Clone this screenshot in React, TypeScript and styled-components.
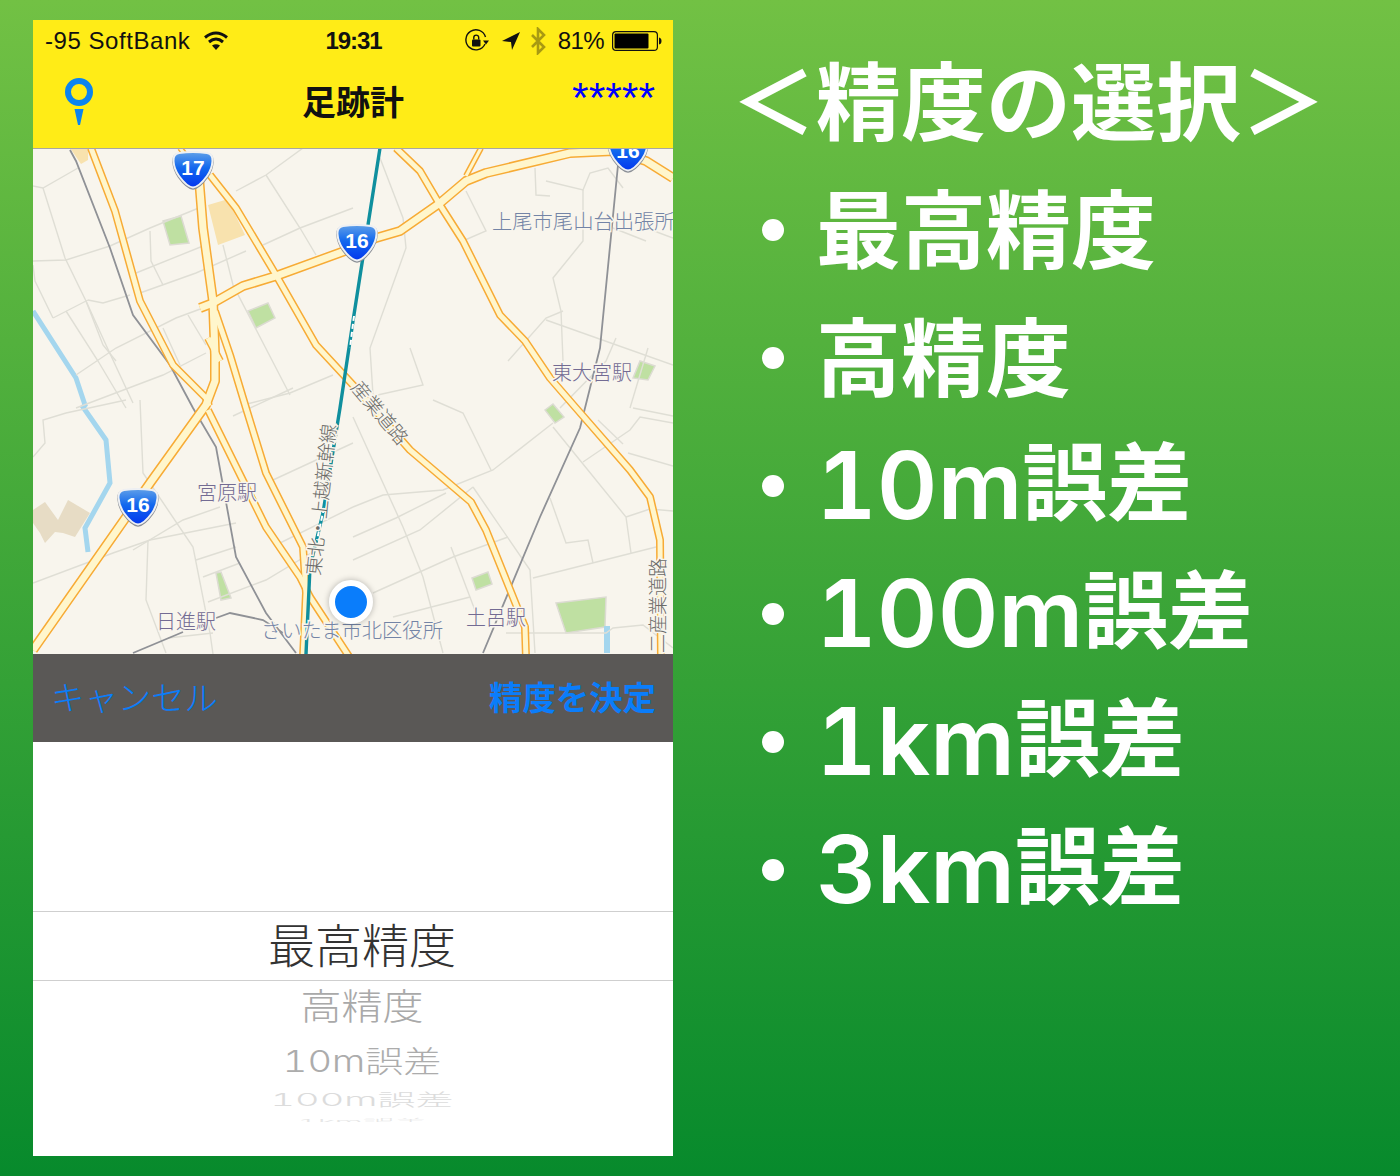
import React from "react";
import styled, { createGlobalStyle } from "styled-components";

const Global = createGlobalStyle`
  html, body { margin: 0; padding: 0; }
  body { background: #078a2c; }
`;

const Page = styled.div`
  width: 1400px;
  height: 1176px;
  display: flex;
  overflow: hidden;
  background: linear-gradient(180deg, #72c144 0%, #078a2c 100%);
  font-family: "Noto Sans CJK JP", sans-serif;
`;

const Phone = styled.div`
  margin: 20px 0 20px 33px;
  width: 640px;
  height: 1136px;
  display: flex;
  flex-direction: column;
  background: #fff;
  flex: none;
`;

const TopBar = styled.header`
  height: 128px;
  background: #ffec17;
  display: flex;
  flex-direction: column;
  flex: none;
`;

const StatusBar = styled.div`
  height: 40px;
  box-sizing: border-box;
  padding: 2px 11px 0 12px;
  display: grid;
  grid-template-columns: 1fr auto 1fr;
  align-items: center;
  font-family: "Liberation Sans", sans-serif;
  font-size: 24px;
  color: #111;
  white-space: nowrap;
`;

const Carrier = styled.span`
  display: flex;
  align-items: center;
  gap: 13px;
  letter-spacing: 0.55px;
`;

const Clock = styled.span`
  font-weight: 700;
  letter-spacing: -1.1px;
`;

const StatusRight = styled.span`
  display: flex;
  align-items: center;
  justify-content: flex-end;
`;

const IconSlot = styled.span<{ $after: number }>`
  display: flex;
  margin-right: ${(p) => p.$after}px;
`;

const Percent = styled.span`
  margin: 0 8px 0 12px;
  letter-spacing: -0.6px;
`;

const NavBar = styled.div`
  flex: 1;
  display: grid;
  grid-template-columns: 180px 1fr 180px;
  align-items: center;
`;

const PinSlot = styled.div`
  padding: 0 0 0 32px;
  display: flex;
  height: 48px;
  margin-top: -4px;
`;

const NavTitle = styled.h1`
  margin: 0 0 6px;
  text-align: center;
  font-size: 34px;
  line-height: 48px;
  font-weight: 700;
  color: #111;
`;

const Stars = styled.div`
  text-align: right;
  padding: 0 18px 14px 0;
  font-family: "Liberation Sans", sans-serif;
  font-size: 42.6px;
  line-height: 40px;
  color: #0000ff;
`;

const MapArea = styled.div`
  position: relative;
  height: 506px;
  flex: none;
  background: #f8f5ed;
  border-top: 1px solid #a9a79f;
  box-sizing: border-box;
  overflow: hidden;
`;

const MapSvg = styled.svg`
  display: block;
  position: absolute;
  top: -1px;
  left: 0;
`;

const MapLabel = styled.text<{ $tone: "place" | "station" | "road" }>`
  font-family: "Noto Sans CJK JP", sans-serif;
  font-size: ${(p) => (p.$tone === "road" ? 19 : p.$tone === "place" ? 20.3 : 20)}px;
  font-weight: 300;
  fill: ${(p) =>
    p.$tone === "place" ? "#7384a6" : p.$tone === "station" ? "#736b93" : "#6b6b68"};
  stroke: #f8f5ed;
  stroke-width: 3px;
  paint-order: stroke;
`;

const ShieldNumber = styled.text`
  font-family: "Liberation Sans", sans-serif;
  font-size: 21px;
  font-weight: 700;
  fill: #fff;
  text-anchor: middle;
`;

const LocationDot = styled.div`
  position: absolute;
  left: 296px;
  top: 431px;
  width: 32px;
  height: 32px;
  border-radius: 50%;
  background: #0a7dfb;
  border: 6px solid #fff;
  box-shadow: 0 0 6px rgba(0, 0, 0, 0.28);
`;

const ActionBar = styled.div`
  height: 88px;
  box-sizing: border-box;
  flex: none;
  background: #5a5856;
  padding: 0 17px 6px 18px;
  display: flex;
  align-items: center;
  justify-content: space-between;
  font-size: 33.4px;
  color: #0a7dfb;
`;

const ActionButton = styled.span<{ $strong?: boolean }>`
  font-weight: ${(p) => (p.$strong ? 700 : 300)};
`;

const Picker = styled.div`
  flex: 1;
  padding: 169px 0 0 18px;
  overflow: hidden;
  color: #333;
`;

const SelectedRow = styled.div`
  margin-left: -18px;
  padding: 0 0 8px 18px;
  height: 60px;
  border-top: 1px solid #cfcfcf;
  border-bottom: 1px solid #cfcfcf;
  display: flex;
  align-items: center;
  justify-content: center;
  font-size: 47px;
  line-height: 1;
  font-weight: 300;
`;

const WheelStack = styled.div`
  height: 141px;
  overflow: hidden;
`;

const WheelRow = styled.div<{ $height: number; $squash: number; $size: number; $color: string }>`
  height: ${(p) => p.$height}px;
  display: flex;
  align-items: center;
  justify-content: center;
  font-family: "Inter", "Noto Sans CJK JP", sans-serif;
  font-variant-numeric: tabular-nums;
  font-size: ${(p) => p.$size}px;
  font-weight: 300;
  line-height: 1;
  color: ${(p) => p.$color};
  white-space: nowrap;
  & > span { display: block; transform: scaleY(${(p) => p.$squash}); }
`;

const Panel = styled.section`
  margin-left: 57px;
  padding-top: 38px;
  color: #fff;
  display: flex;
  flex-direction: column;
`;

const PanelTitle = styled.h2`
  margin: 0 0 0 1px;
  height: 128px;
  box-sizing: border-box;
  padding-bottom: 11px;
  display: flex;
  align-items: center;
  font-size: 85px;
  font-weight: 700;
  line-height: 1;
`;

const Item = styled.div`
  height: 128px;
  display: flex;
  align-items: center;
  white-space: nowrap;
`;

const ItemText = styled.span`
  font-size: 85px;
  font-weight: 700;
  line-height: 1;
  margin-bottom: 12px;
`;

const Bullet = styled.span`
  width: 22px;
  height: 22px;
  margin: 0 32px;
  border-radius: 50%;
  background: #fff;
  flex: none;
`;

const Latin = styled.span`
  font-family: "Inter", sans-serif;
  font-variant-numeric: tabular-nums;
  font-size: 94px;
  font-weight: 600;
  position: relative;
  top: 5px;
`;

const roads: { w: number; d: string }[] = [
  { w: 8, d: "58,0 82,63 107,153 140,217 173,250 176,258" },
  { w: 10, d: "166,30 170,80 180,153 182,207 182,233 173,257 117,335 0,502" },
  { w: 8, d: "182,163 197,207 213,260 233,325 270,399 273,445 270,510" },
  { w: 8, d: "175,190 187,213" },
  { w: 8, d: "175,262 233,379 267,429 277,449 317,510" },
  { w: 8, d: "177,27 203,60 243,127 283,197 320,237 377,302 438,354 453,382 480,449 492,479 493,510" },
  { w: 10, d: "167,160 180,155 210,138 243,128 320,100 343,90 367,83 407,55 433,33 453,25 537,5 580,3 613,13 640,30" },
  { w: 8, d: "363,0 387,23 407,57 430,93 467,167 492,193 517,230 543,260 597,322 617,349 627,392 628,510" },
  { w: 6, d: "448,0 433,28" },
  { w: 6, d: "147,0 168,27" },
];

const minor = [
  "0,38 10,40 45,20", "10,40 32,110 53,153 73,197 100,255", "0,113 33,112 77,98 117,80 173,57",
  "203,43 233,27 270,0", "233,27 267,80 283,107", "230,97 267,80 320,60", "103,125 170,98",
  "107,145 163,125 213,103", "55,152 70,155 97,147", "20,170 55,152", "0,117 2,133 20,170",
  "33,163 65,213 93,260", "53,153 70,197 83,213", "43,227 83,200 143,170 170,160",
  "43,260 130,227 173,205", "155,167 173,197", "130,180 147,217", "190,97 200,137 257,247",
  "210,257 257,245 300,227", "117,83 118,113 130,137", "347,10 370,70 373,100 337,200 340,247",
  "433,43 453,83 432,92", "513,33 550,42 557,25 575,20 590,40", "502,20 503,47 517,48",
  "550,42 550,93 520,130 528,163 530,213", "530,163 513,170 475,213", "513,172 640,217",
  "583,190 573,213 527,260", "615,200 597,260", "377,200 390,237 340,248", "613,80 640,90",
  "580,80 613,93", "0,435 80,405 117,392 203,375", "100,402 150,372 187,359",
  "107,252 110,325 160,399 177,485 180,506", "115,392 113,452 133,505", "163,412 203,399",
  "170,429 207,415", "175,454 233,432 283,402", "240,332 320,295", "247,395 320,359",
  "0,309 12,295 10,272 33,265 93,252", "400,252 430,265 458,322", "320,359 350,347 410,342 460,322 520,275",
  "320,389 363,370 413,345", "320,412 387,382 440,339", "320,269 370,379 390,429 410,505",
  "340,445 420,409 475,389", "360,469 437,449", "418,399 443,465", "440,339 497,422 502,505",
  "500,430 623,399", "517,350 533,395 555,392 560,415", "550,314 597,282 607,269 640,275",
  "520,279 593,369 598,405", "593,369 617,361 640,363", "473,485 573,485 580,480 610,477 640,500",
  "600,260 640,268", "595,305 640,318", "565,272 590,296", "135,490 180,485", "200,268 260,240",
];

const parks = [
  "130,73 148,68 156,95 137,97", "215,163 235,155 242,170 223,180", "183,425 188,424 198,450 188,452",
  "600,230 607,213 622,218 615,232", "512,262 520,256 531,269 522,275", "439,430 455,424 459,436 443,442",
  "523,455 573,449 572,479 533,485",
];

const railGray = [
  "37,2 43,13 77,100 100,167 137,217 160,260 183,299 203,409 233,465 263,505",
  "100,505 150,484", "183,470 197,465 230,472 250,485", "585,17 567,200 552,260 547,280 507,369 450,505",
];

const shieldPath =
  "M-14 -17 Q0 -19 14 -17 Q20 -16 19.5 -9 Q19 -1 14 6 Q6 17 0 17.5 Q-6 17 -14 6 Q-19 -1 -19.5 -9 Q-20 -16 -14 -17Z";

const Shield = ({ x, y, n }: { x: number; y: number; n: string }) => (
  <g transform={`translate(${x} ${y})`}>
    <path d={shieldPath} fill="none" stroke="#8b8f96" strokeWidth="2.4" transform="translate(0 1)" />
    <path d={shieldPath} fill="url(#shield)" stroke="#eef0f3" strokeWidth="2" />
    <ShieldNumber x={0} y={4.5}>{n}</ShieldNumber>
  </g>
);

const StreetMap = () => (
  <MapSvg width="640" height="506" viewBox="0 0 640 506">
    <defs>
      <linearGradient id="shield" x1="0" y1="0" x2="0" y2="1">
        <stop offset="0" stopColor="#5f9fe8" />
        <stop offset="0.45" stopColor="#1268ee" />
        <stop offset="1" stopColor="#0336ee" />
      </linearGradient>
    </defs>
    {parks.map((p) => (
      <polygon key={p} points={p} fill="#bfe0a2" stroke="#dcdbd2" strokeWidth="1.5" />
    ))}
    <polygon points="175,57 192,52 200,62 212,87 185,97" fill="#f8e2ae" />
    <polygon points="37,0 55,0 55,12 48,16" fill="#f8e2ae" />
    <polygon
      points="0,362 12,354 25,372 35,352 57,365 42,389 30,385 22,384 12,395 7,385 0,375"
      fill="#e7dcc5"
    />
    <polyline points="0,163 43,230 52,257 50,259 73,292 77,335 52,380 55,404" fill="none" stroke="#a4d6ee" strokeWidth="5" />
    <polyline points="574,478 574,505" fill="none" stroke="#a4d6ee" strokeWidth="6" />
    {minor.map((m) => (
      <polyline key={m} points={m} fill="none" stroke="#dfded5" strokeWidth="1.4" />
    ))}
    {railGray.map((r) => (
      <polyline key={r} points={r} fill="none" stroke="#8f9196" strokeWidth="1.8" />
    ))}
    {roads.map((r) => (
      <polyline key={r.d} points={r.d} fill="none" stroke="#f7ab35" strokeWidth={r.w} strokeLinejoin="round" />
    ))}
    {roads.map((r) => (
      <polyline key={r.d + "i"} points={r.d} fill="none" stroke="#fff6cc" strokeWidth={r.w - 3} strokeLinejoin="round" />
    ))}
    <polyline points="347,0 320,173 307,260 290,365 277,419 273,506" fill="none" stroke="#0f8f9e" strokeWidth="3.4" />
    <polyline points="321,168 317,200" fill="none" stroke="#fff" strokeWidth="2" strokeDasharray="5 3" />
    <polyline points="291,360 284,392" fill="none" stroke="#fff" strokeWidth="2" strokeDasharray="5 3" />

    <MapLabel $tone="place" x={459} y={81}>上尾市尾山台出張所</MapLabel>
    <MapLabel $tone="station" x={519} y={232}>東大宮駅</MapLabel>
    <MapLabel $tone="station" x={164} y={352}>宮原駅</MapLabel>
    <MapLabel $tone="station" x={123} y={481}>日進駅</MapLabel>
    <MapLabel $tone="station" x={433} y={477}>土呂駅</MapLabel>
    <MapLabel $tone="place" x={228} y={490}>さいたま市北区役所</MapLabel>
    <MapLabel $tone="road" transform="translate(317 240) rotate(50)">産業道路</MapLabel>
    <MapLabel $tone="road" transform="translate(287 428) rotate(-84)">東北・上越新幹線</MapLabel>
    <MapLabel $tone="road" transform="translate(632 505) rotate(-90)">二産業道路</MapLabel>

    <Shield x={160} y={22} n="17" />
    <Shield x={324} y={95} n="16" />
    <Shield x={105} y={359} n="16" />
    <Shield x={595} y={5} n="16" />
  </MapSvg>
);

const Wifi = () => (
  <svg width="26" height="20" viewBox="0 0 26 20">
    <path d="M13 19 L9 14.5 Q13 12 17 14.5 Z" fill="#111" />
    <path d="M6 11 Q13 5 20 11" fill="none" stroke="#111" strokeWidth="3" />
    <path d="M2 6.5 Q13 -2.5 24 6.5" fill="none" stroke="#111" strokeWidth="3" />
  </svg>
);

const RotationLock = () => (
  <svg width="24" height="24" viewBox="0 0 24 24" fill="none">
    <path d="M20 15 A10 10 0 1 1 20.5 8" stroke="#111" strokeWidth="1.4" />
    <path d="M18 11.5 L24 11.5 L21 15.5 Z" fill="#111" />
    <rect x="7" y="10.5" width="8.5" height="7" rx="1" fill="#111" />
    <path d="M8.8 10.5 V8.6 A2.4 2.4 0 0 1 13.7 8.6 V10.5" stroke="#111" strokeWidth="1.4" />
  </svg>
);

const LocationArrow = () => (
  <svg width="18" height="18" viewBox="0 0 18 18">
    <path d="M18 0 L0 9 L9 10 L10 18 Z" fill="#111" />
  </svg>
);

const Bluetooth = () => (
  <svg width="16" height="28" viewBox="0 0 16 28" fill="none">
    <path d="M2 8 L14 20 L8 26 V2 L14 8 L2 20" stroke="#a89a12" strokeWidth="2.6" />
  </svg>
);

const Battery = () => (
  <svg width="50" height="20" viewBox="0 0 50 20">
    <rect x="0.6" y="0.6" width="44.8" height="18.8" rx="3.5" fill="none" stroke="#111" strokeWidth="1.2" />
    <rect x="2.5" y="2.5" width="34" height="15" rx="1" fill="#000" />
    <path d="M47 6.5 Q49.5 7 49.5 10 Q49.5 13 47 13.5 Z" fill="#111" />
  </svg>
);

const Pin = () => (
  <svg width="28" height="48" viewBox="0 0 28 48" fill="none">
    <circle cx="14" cy="14" r="11" stroke="#0a84f0" strokeWidth="6" />
    <path d="M9.5 31 H18.5 L15 47 H13 Z" fill="#0a84f0" />
  </svg>
);

const items: { latin?: string; cjk: string }[] = [
  { cjk: "最高精度" },
  { cjk: "高精度" },
  { latin: "10m", cjk: "誤差" },
  { latin: "100m", cjk: "誤差" },
  { latin: "1km", cjk: "誤差" },
  { latin: "3km", cjk: "誤差" },
];

export default function App() {
  return (
    <Page>
      <Global />
      <Phone>
        <TopBar>
          <StatusBar>
            <Carrier>
              -95 SoftBank
              <Wifi />
            </Carrier>
            <Clock>19:31</Clock>
            <StatusRight>
              <IconSlot $after={13}><RotationLock /></IconSlot>
              <IconSlot $after={10}><LocationArrow /></IconSlot>
              <IconSlot $after={0}><Bluetooth /></IconSlot>
              <Percent>81%</Percent>
              <Battery />
            </StatusRight>
          </StatusBar>
          <NavBar>
            <PinSlot><Pin /></PinSlot>
            <NavTitle>足跡計</NavTitle>
            <Stars>*****</Stars>
          </NavBar>
        </TopBar>
        <MapArea>
          <StreetMap />
          <LocationDot />
        </MapArea>
        <ActionBar>
          <ActionButton>キャンセル</ActionButton>
          <ActionButton $strong>精度を決定</ActionButton>
        </ActionBar>
        <Picker>
          <SelectedRow>最高精度</SelectedRow>
          <WheelStack>
            <WheelRow $height={51} $size={41} $squash={0.9} $color="#a9a9a9"><span>高精度</span></WheelRow>
            <WheelRow $height={57} $size={38} $squash={0.78} $color="#acacac"><span>10m誤差</span></WheelRow>
            <WheelRow $height={22} $size={38} $squash={0.45} $color="#dcdcdc"><span>100m誤差</span></WheelRow>
            <WheelRow $height={22} $size={32} $squash={0.25} $color="#e6e6e6"><span>1km誤差</span></WheelRow>
          </WheelStack>
        </Picker>
      </Phone>
      <Panel>
        <PanelTitle>＜精度の選択＞</PanelTitle>
        {items.map((it) => (
          <Item key={it.cjk + (it.latin ?? "")}>
            <Bullet />
            <ItemText>
              {it.latin && <Latin>{it.latin}</Latin>}
              {it.cjk}
            </ItemText>
          </Item>
        ))}
      </Panel>
    </Page>
  );
}
